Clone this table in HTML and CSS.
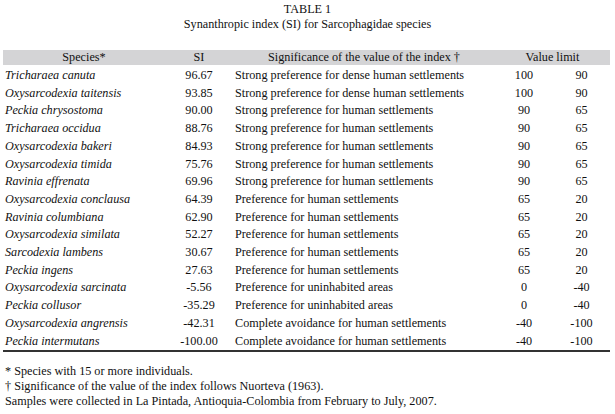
FILE: index.html
```html
<!DOCTYPE html>
<html>
<head>
<meta charset="utf-8">
<link rel="stylesheet" href="styles.css">
</head>
<body>
<div class="page">
  <div class="caption">
    <div>TABLE 1</div>
    <div>Synanthropic index (SI) for Sarcophagidae species</div>
  </div>
  <div class="table">
    <div class="hd sp">Species*</div>
    <div class="hd c">SI</div>
    <div class="hd c sighd">Significance of the value of the index †</div>
    <div class="hd c span2">Value limit</div>

    <div class="sp i">Tricharaea canuta</div><div class="c">96.67</div><div class="sig">Strong preference for dense human settlements</div><div class="c">100</div><div class="c">90</div>
    <div class="sp i">Oxysarcodexia taitensis</div><div class="c">93.85</div><div class="sig">Strong preference for dense human settlements</div><div class="c">100</div><div class="c">90</div>
    <div class="sp i">Peckia chrysostoma</div><div class="c">90.00</div><div class="sig">Strong preference for human settlements</div><div class="c">90</div><div class="c">65</div>
    <div class="sp i">Tricharaea occidua</div><div class="c">88.76</div><div class="sig">Strong preference for human settlements</div><div class="c">90</div><div class="c">65</div>
    <div class="sp i">Oxysarcodexia bakeri</div><div class="c">84.93</div><div class="sig">Strong preference for human settlements</div><div class="c">90</div><div class="c">65</div>
    <div class="sp i">Oxysarcodexia timida</div><div class="c">75.76</div><div class="sig">Strong preference for human settlements</div><div class="c">90</div><div class="c">65</div>
    <div class="sp i">Ravinia effrenata</div><div class="c">69.96</div><div class="sig">Strong preference for human settlements</div><div class="c">90</div><div class="c">65</div>
    <div class="sp i">Oxysarcodexia conclausa</div><div class="c">64.39</div><div class="sig">Preference for human settlements</div><div class="c">65</div><div class="c">20</div>
    <div class="sp i">Ravinia columbiana</div><div class="c">62.90</div><div class="sig">Preference for human settlements</div><div class="c">65</div><div class="c">20</div>
    <div class="sp i">Oxysarcodexia similata</div><div class="c">52.27</div><div class="sig">Preference for human settlements</div><div class="c">65</div><div class="c">20</div>
    <div class="sp i">Sarcodexia lambens</div><div class="c">30.67</div><div class="sig">Preference for human settlements</div><div class="c">65</div><div class="c">20</div>
    <div class="sp i">Peckia ingens</div><div class="c">27.63</div><div class="sig">Preference for human settlements</div><div class="c">65</div><div class="c">20</div>
    <div class="sp i">Oxysarcodexia sarcinata</div><div class="c">-5.56</div><div class="sig">Preference for uninhabited areas</div><div class="c">0</div><div class="c">-40</div>
    <div class="sp i">Peckia collusor</div><div class="c">-35.29</div><div class="sig">Preference for uninhabited areas</div><div class="c">0</div><div class="c">-40</div>
    <div class="sp i">Oxysarcodexia angrensis</div><div class="c">-42.31</div><div class="sig">Complete avoidance for human settlements</div><div class="c">-40</div><div class="c">-100</div>
    <div class="sp i">Peckia intermutans</div><div class="c">-100.00</div><div class="sig">Complete avoidance for human settlements</div><div class="c">-40</div><div class="c">-100</div>
  </div>
  <div class="notes">
    <div>* Species with 15 or more individuals.</div>
    <div>† Significance of the value of the index follows Nuorteva (1963).</div>
    <div>Samples were collected in La Pintada, Antioquia-Colombia from February to July, 2007.</div>
  </div>
</div>
</body>
</html>
```
FILE: styles.css
```css
html, body {
  margin: 0;
  padding: 0;
  background: #ffffff;
}
.page {
  width: 615px;
  height: 414px;
  font-family: "Liberation Serif", "Times New Roman", serif;
  font-size: 12.2px;
  color: #111;
  padding-top: 2px;
  box-sizing: border-box;
}
.caption {
  text-align: center;
  line-height: 15px;
}
.table {
  display: grid;
  grid-template-columns: 162px 68px 262px 58px 57px;
  width: 607px;
  margin: 18px 0 0 3px;
  border-bottom: 2px solid #333;
  line-height: 17.7px;
  white-space: nowrap;
}
.hd {
  background: #d4d4d6;
  line-height: 15px;
  margin-bottom: 2px;
}
.hd.sp {
  text-align: center;
}
.span2 {
  grid-column: span 2;
}
.sp {
  padding-left: 2px;
}
.hd.sp {
  padding-left: 0;
}
.i {
  font-style: italic;
}
.c {
  text-align: center;
}
.sig {
  padding-left: 2px;
}
.notes {
  margin: 12px 0 0 5px;
  line-height: 15px;
}
```
